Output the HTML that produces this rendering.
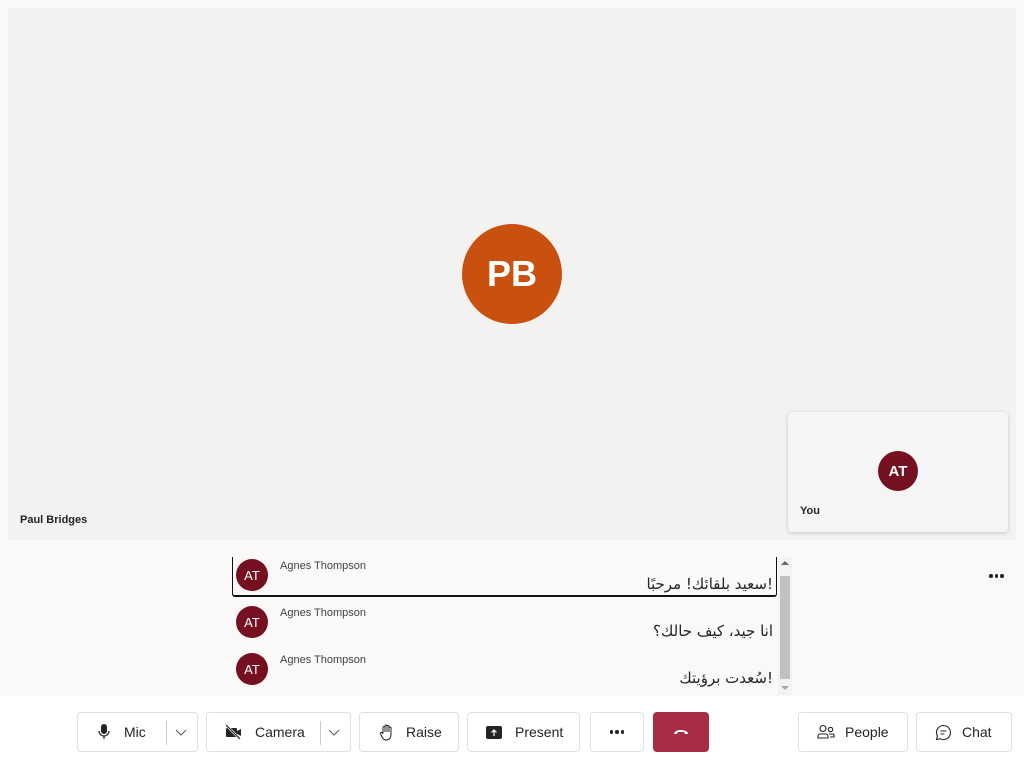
<!DOCTYPE html><html><head><meta charset="utf-8"><style>
*{box-sizing:border-box;margin:0;padding:0}
body{width:1024px;height:768px;background:#faf9f8;font-family:"Liberation Sans","Noto Sans CJK SC",sans-serif;position:relative;overflow:hidden;color:#242424}
.stage{position:absolute;left:8px;top:8px;width:1008px;height:532px;background:#f3f2f1}
.av{position:absolute;border-radius:50%;color:#fff;display:flex;align-items:center;justify-content:center;font-weight:bold}
.self{position:absolute;left:788px;top:412px;width:220px;height:120px;background:#f5f5f5;border-radius:4px;box-shadow:0 1px 4px rgba(0,0,0,.18)}
.lbl{position:absolute;font-size:11px;font-weight:bold;color:#242424}
.row{position:absolute;left:232px;width:545px;height:40px}
.row .a{left:4px;top:2px;width:32px;height:32px;background:#751020;font-size:13px;font-weight:normal}
.row .n{position:absolute;left:48px;top:3px;font-size:11px;color:#424242}
.row .m{position:absolute;right:4px;top:18px;font-size:15px;direction:rtl;font-family:"DejaVu Sans",sans-serif}
.bar{position:absolute;left:0;top:696px;width:1024px;height:72px;background:#fff}
.b{position:absolute;top:712px;height:40px;border:1px solid #e0e0e0;border-radius:4px;background:#fff;display:flex;align-items:center;font-size:14px;color:#242424}
.b svg{flex:none}
.dots{display:flex;gap:2px}.dots i{width:3.5px;height:3.5px;border-radius:50%;background:#242424}
</style></head><body>
<div class="stage">
<div class="av" style="left:454px;top:216px;width:100px;height:100px;background:#ca5010;font-size:36px">PB</div>
<div class="lbl" style="left:12px;top:506px">Paul Bridges</div>
</div>
<div class="self">
<div class="av" style="left:90px;top:39px;width:40px;height:40px;background:#751020;font-size:15px">AT</div>
<div class="lbl" style="left:12px;top:93px">You</div>
</div>
<div class="row" style="top:557px;border:1px solid #111;border-top:none;border-bottom-width:2px;border-radius:0 0 3px 3px"><div class="av a" style="left:3px">AT</div><div class="n" style="left:47px">Agnes Thompson</div><div class="m" style="right:3px">!سعيد بلقائك! مرحبًا</div></div>
<div class="row" style="top:604px"><div class="av a">AT</div><div class="n">Agnes Thompson</div><div class="m">انا جيد، كيف حالك؟</div></div>
<div class="row" style="top:651px"><div class="av a">AT</div><div class="n">Agnes Thompson</div><div class="m">!سُعدت برؤيتك</div></div>
<div style="position:absolute;left:778px;top:557px;width:14px;height:138px;background:#f3f3f3"></div>
<div style="position:absolute;left:780px;top:576px;width:10px;height:103px;background:#c1c1c1"></div>
<div style="position:absolute;left:781px;top:561px;border:4px solid transparent;border-bottom:4px solid #666;border-top:none"></div>
<div style="position:absolute;left:781px;top:686px;border:4px solid transparent;border-top:4px solid #aaa;border-bottom:none"></div>
<div class="dots" style="position:absolute;left:989px;top:574px"><i></i><i></i><i></i></div>
<div class="bar"></div>
<div class="b" style="left:77px;width:121px"><svg style="margin-left:20px" width="12" height="16" viewBox="0 0 12 16"><rect x="3" y="0" width="6" height="10" rx="3" fill="#242424"/><path d="M1 7a5 5 0 0 0 10 0M6 12v3" stroke="#242424" fill="none" stroke-width="1.2"/></svg><span style="margin-left:14px">Mic</span><span style="position:absolute;left:88px;top:8px;width:1px;height:24px;background:#ccc"></span><svg style="position:absolute;left:97px;top:16px" width="12" height="8"><path d="M1 1l5 5 5-5" stroke="#555" fill="none"/></svg></div>
<div class="b" style="left:206px;width:145px"><svg style="margin-left:18px" width="18" height="16" viewBox="0 0 18 16"><rect x="1" y="4" width="11" height="9" rx="1" fill="#242424"/><path d="M12 7l4-2v7l-4-2z" fill="#242424"/><path d="M1 1l14 14" stroke="#fff" stroke-width="2.5"/><path d="M1 1l14 14" stroke="#242424" stroke-width="1.2"/></svg><span style="margin-left:12px">Camera</span><span style="position:absolute;left:113px;top:8px;width:1px;height:24px;background:#ccc"></span><svg style="position:absolute;left:121px;top:16px" width="12" height="8"><path d="M1 1l5 5 5-5" stroke="#555" fill="none"/></svg></div>
<div class="b" style="left:359px;width:100px"><svg style="margin-left:19px" width="16" height="17" viewBox="0 0 16 17"><path d="M4 9V3.5a1 1 0 0 1 2 0V8M6 8V2a1 1 0 0 1 2 0v6M8 8V2.5a1 1 0 0 1 2 0V8M10 8V4a1 1 0 0 1 2 0v6c0 4-2 6-5 6-2 0-3-1-4-3L1.5 10a1 1 0 0 1 2-1L4 10" stroke="#242424" fill="none" stroke-width="1"/></svg><span style="margin-left:11px">Raise</span></div>
<div class="b" style="left:467px;width:113px"><svg style="margin-left:18px" width="16" height="13"><rect x="0" y="0" width="16" height="13" rx="2" fill="#242424"/><path d="M8 10V4M5.5 6.5L8 4l2.5 2.5" stroke="#fff" fill="none" stroke-width="1.2"/></svg><span style="margin-left:13px">Present</span></div>
<div class="b" style="left:590px;width:54px;justify-content:center"><div class="dots"><i></i><i></i><i></i></div></div>
<div class="b" style="left:653px;width:56px;background:#a72d45;border-color:#a72d45;justify-content:center"><svg width="16" height="8"><path d="M1 6c0-3 4-4 7-4s7 1 7 4l-3 0-1-2H5L4 6z" fill="#fff"/></svg></div>
<div class="b" style="left:798px;width:110px"><svg style="margin-left:18px" width="18" height="16" viewBox="0 0 18 16" fill="none" stroke="#242424" stroke-width="1.1"><circle cx="6" cy="4.5" r="3"/><path d="M1 14v-2a2 2 0 0 1 2-2h6a2 2 0 0 1 2 2v2z"/><circle cx="13.5" cy="5.5" r="2.2"/><path d="M12 10h3.5a1.5 1.5 0 0 1 1.5 1.5V13h-4"/></svg><span style="margin-left:10px">People</span></div>
<div class="b" style="left:916px;width:96px"><svg style="margin-left:18px" width="17" height="17" viewBox="0 0 17 17" fill="none" stroke="#242424" stroke-width="1.1"><path d="M8.5 1.5a7 7 0 1 1-3.3 13.2L1.5 15.5l.9-3.6A7 7 0 0 1 8.5 1.5z"/><path d="M5.5 7h6M5.5 10h4"/></svg><span style="margin-left:10px">Chat</span></div>
</body></html>
